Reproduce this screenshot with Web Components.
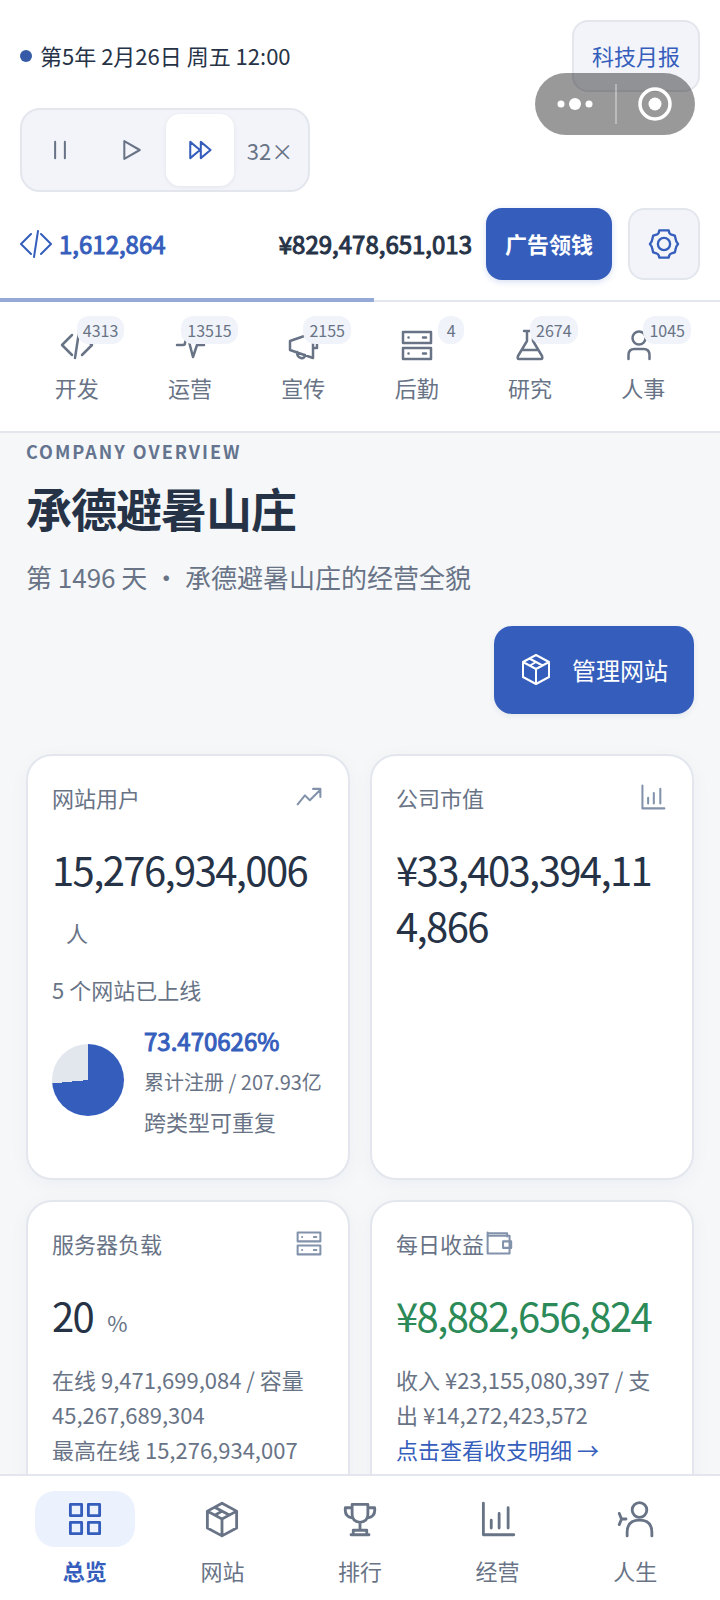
<!DOCTYPE html>
<html lang="zh-CN">
<head>
<meta charset="utf-8">
<meta name="viewport" content="width=device-width, initial-scale=1">
<title>公司总览</title>
<style>
html, body { margin: 0; height: 100%; }
body {
  --ink: #263347; --muted: #687386; --blue: #355ebc; --line: #e3e7ed; --soft: #f2f4f9; --page: #f5f7f9; --green: #2b8a58; --icon: #8292ab;
  font-family: "Noto Sans CJK SC", "Noto Sans", sans-serif; font-size: 22px; color: var(--ink); background: var(--page);
}
</style>
</head>
<body>
<game-app></game-app>
<script>
const define = (name, html) => customElements.define(name, class extends HTMLElement {
  connectedCallback() {
    if (this.shadowRoot) return;
    const root = this.attachShadow({ mode: 'open' });
    const t = document.createElement('template');
    t.innerHTML = typeof html === 'function' ? html(this) : html;
    root.append(t.content.cloneNode(true));
  }
});

const ICONS = {
  pause: '<path d="M10 6v20M22 6v20"/>',
  play: '<path d="M9 5v22l19-11z"/>',
  forward: '<path d="M4 6v20l12-10zM17 6v20l12-10z"/>',
  code: '<path d="M11 6L1 16l10 10M21 6l10 10-10 10M18 3l-4 26"/>',
  gear: '<path d="M11 1.500h10q.5 4 3 4.500l3.500 1 1 4q0 2 2.500 5-2.500 3-2.500 5l-1 4-3.500 1q-2.500.5-3 4.500h-10q-.5-4-3-4.500l-3.500-1-1-4q0-2-2.500-5 2.500-3 2.500-5l1-4 3.500-1q2.500-.5 3-4.500z"/><circle cx="16" cy="16" r="6.500"/>',
  pulse: '<path d="M3 16h6q2 0 2-2l2-9 6 23 4-12h7"/>',
  megaphone: '<path d="M3 12L26 4v25L3 21zM26 11h4v8h-4M10 23c0 7 8 8 8 3"/>',
  server: '<rect x="2" y="3" width="28" height="11"/><rect x="2" y="19" width="28" height="11"/><path d="M7.500 8.500h.1M22 8.500h3M7.500 24.500h.1M22 24.500h3"/>',
  flask: '<path d="M10 2h12M13 2v10L4 27q-1 3 1 3h22q2 0 1-3L19 12V2M8 21h16"/>',
  person: '<circle cx="12" cy="9" r="6.500"/><path d="M1.500 30v-4q0-6 6-6h9q6 0 6 6v4"/>',
  box: '<path d="M16 2l13 7v15l-13 7-13-7V9zM3 9l13 7 13-7M16 16v15M9.500 5.500l13 7M10 12.500l6-3.500"/>',
  trend: '<path d="M2 25L11 14l6 6L30 7M21 6h9v10"/>',
  chart: '<path d="M3 2v28h27M10 17v7M17 11v13M25 6v18"/>',
  wallet: '<path d="M2 4h24v4M2 3v26h27V7H2M21 14h10v8H21z"/>',
  grid: '<path d="M3 3h10v10H3zM19 3h10v10H19zM3 19h10v10H3zM19 19h10v10H19z"/>',
  trophy: '<path d="M9 3h14v9q0 6-7 7-7-1-7-7zM9 6H3q-1 8 6 9M23 6h6q1 8-6 9M16 19v7M10 30v-4h12v4M8 30h16"/>',
  life: '<circle cx="20" cy="8" r="6.500"/><path d="M9 31v-3q0-11 11-11t11 11v3M2 11l2 5-2 5M4 16l4 0"/>'
};

define('ui-icon', el => `<style>
:host { display: inline-flex; flex: none; }
svg { display: block; overflow: visible; width: var(--size, 28px); height: var(--size, 28px); fill: none; stroke: currentColor; stroke-width: var(--stroke, 2.5); stroke-linejoin: round; stroke-linecap: round; }
</style><svg viewBox="0 0 32 32" aria-hidden="true">${ICONS[el.getAttribute('name')]}</svg>`);

define('speed-control', `<style>
:host { display: flex; }
.group { display: flex; gap: 2px; padding: 4px; border: 2px solid var(--line); border-radius: 20px; background: var(--soft); }
button { width: 68px; height: 72px; padding: 0; border: 0; border-radius: 14px; background: none; color: var(--muted); font: inherit; display: flex; align-items: center; justify-content: center; }
button.on { background: #fff; color: var(--blue); box-shadow: 0 1px 4px #26334714; }
ui-icon { --size: 26px; }
</style>
<div class="group" role="group" aria-label="速度">
<button aria-label="暂停"><ui-icon name="pause"></ui-icon></button>
<button aria-label="播放"><ui-icon name="play"></ui-icon></button>
<button class="on" aria-label="快进"><ui-icon name="forward"></ui-icon></button>
<button>32×</button>
</div>`);

define('status-header', `<style>
:host { display: block; flex: none; background: #fff; }
.rows { display: flex; flex-direction: column; gap: 16px; padding: 20px 20px 18px; }
.row { display: flex; align-items: center; }
.dot { width: 12px; height: 12px; border-radius: 50%; background: #365aa5; margin-right: 8px; }
time { flex: 1; }
time, .num { padding-bottom: 2px; }
button { box-sizing: border-box; height: 72px; padding: 0 18px 2px; border: 2px solid var(--line); border-radius: 16px; background: var(--soft); color: var(--blue); font: inherit; display: flex; align-items: center; justify-content: center; }
.ad { padding: 0 17px 2px; border-color: var(--blue); background: var(--blue); color: #fff; font-weight: 700; box-shadow: 0 2px 6px #355ebc33; margin: 0 16px 0 14px; }
.set { width: 72px; padding: 0; }
.points { flex: 1; display: flex; align-items: center; gap: 7px; color: var(--blue); }
.num { font-size: 24px; -webkit-text-stroke: 1px currentColor; }
ui-icon { --size: 32px; --stroke: 2; }
.set ui-icon { --size: 30px; --stroke: 2.5; }
.track { display: flex; align-items: flex-end; height: 4px; background: linear-gradient(var(--line), var(--line)) bottom / 100% 2px no-repeat; }
.fill { width: 52%; height: 4px; background: #94a9d6; }
</style>
<div class="rows">
<div class="row"><span class="dot"></span><time>第5年 2月26日 周五 12:00</time><button>科技月报</button></div>
<speed-control></speed-control>
<div class="row"><span class="points"><ui-icon name="code"></ui-icon><span class="num">1,612,864</span></span><span class="num">¥829,478,651,013</span><button class="ad">广告领钱</button><button class="set" aria-label="设置"><ui-icon name="gear"></ui-icon></button></div>
</div>
<div class="track"><div class="fill"></div></div>`);

define('window-capsule', `<style>
:host { position: absolute; top: 73px; right: 25px; display: flex; width: 160px; height: 62px; border-radius: 31px; background: #00000066; color: #fff; }
button { flex: 1; border: 0; padding: 0; background: none; color: inherit; display: flex; align-items: center; justify-content: center; }
button + button { background: linear-gradient(#ffffff55, #ffffff55) left / 2px 40px no-repeat; }
svg { fill: currentColor; }
</style>
<button aria-label="更多"><svg width="36" height="14"><circle cx="4" cy="7" r="3.500"/><circle cx="18" cy="7" r="6"/><circle cx="32" cy="7" r="3.500"/></svg></button>
<button aria-label="关闭"><svg width="34" height="34"><circle cx="17" cy="17" r="15" fill="none" stroke="currentColor" stroke-width="3.500"/><circle cx="17" cy="17" r="6.500"/></svg></button>`);

define('dept-item', el => `<style>
:host { flex: 1; display: block; }
button { position: relative; width: 100%; border: 0; padding: 27px 0 28px; background: none; color: var(--muted); font: inherit; line-height: 32px; display: flex; flex-direction: column; align-items: center; gap: 10px; }
.badge { position: absolute; top: 14px; right: 9px; box-sizing: border-box; min-width: 26px; height: 28px; padding: 0 6px; border-radius: 12px; background: #f0f3f9; font-size: 16px; line-height: 28px; text-align: center; }
ui-icon { --size: 32px; }
</style><button><ui-icon name="${el.getAttribute('icon')}"></ui-icon><slot></slot><span class="badge">${el.getAttribute('count')}</span></button>`);

define('dept-nav', `<style>
:host { display: flex; flex: none; padding: 0 20px; background: #fff; border-bottom: 2px solid var(--line); }
</style>
<dept-item icon="code" count="4313">开发</dept-item>
<dept-item icon="pulse" count="13515">运营</dept-item>
<dept-item icon="megaphone" count="2155">宣传</dept-item>
<dept-item icon="server" count="4">后勤</dept-item>
<dept-item icon="flask" count="2674">研究</dept-item>
<dept-item icon="person" count="1045">人事</dept-item>`);

define('page-heading', `<style>
:host { display: block; }
.over { margin: 0; font-size: 18px; line-height: 28px; font-weight: 700; letter-spacing: 2px; color: #64748f; }
h1 { margin: 10px 0 0; font-size: 46px; line-height: 64px; font-weight: 700; letter-spacing: -1px; }
.sub { margin: 18px 0 0; font-size: 26px; line-height: 40px; color: var(--muted); }
button { margin: 29px 0 0 auto; height: 88px; padding: 0 26px 2px; border: 0; border-radius: 18px; background: var(--blue); color: #fff; font: inherit; font-size: 24px; display: flex; align-items: center; gap: 20px; box-shadow: 0 2px 6px #26334714; }
ui-icon { --size: 32px; --stroke: 2; }
</style>
<p class="over">COMPANY OVERVIEW</p>
<h1>承德避暑山庄</h1>
<p class="sub">第 1496 天 · 承德避暑山庄的经营全貌</p>
<button><ui-icon name="box"></ui-icon>管理网站</button>`);

define('stat-card', el => `<style>
:host { display: block; box-sizing: border-box; min-width: 0; padding: 24px 24px 38px; border: 2px solid var(--line); border-radius: 26px; background: #fff; box-shadow: 0 4px 20px #2633470a; color: var(--muted); }
header { display: flex; align-items: center; justify-content: space-between; padding-right: 2px; line-height: 34px; }
:host([compact]) header { justify-content: flex-start; gap: 2px; }
ui-icon { --size: 26px; color: var(--icon); }
.value { margin: 27px 0 0; font-size: 40px; line-height: 56px; letter-spacing: -.04em; color: var(--value, var(--ink)); word-break: break-all; }
.unit { margin-left: 14px; font-size: 22px; line-height: 22px; letter-spacing: 0; color: var(--muted); }
.detail { line-height: 35px; margin-top: 19px; }
</style>
<header><span>${el.getAttribute('label')}</span><ui-icon name="${el.getAttribute('icon')}"></ui-icon></header>
<p class="value">${el.getAttribute('value')}${el.hasAttribute('unit') ? `<wbr><span class="unit">${el.getAttribute('unit')}</span>` : ''}</p>
<div class="detail"><slot></slot></div>`);

define('share-pie', `<style>
:host { display: flex; align-items: center; gap: 20px; margin-top: 13px; }
.pie { flex: none; width: 72px; height: 72px; border-radius: 50%; background: conic-gradient(var(--blue) 73.47%, #e2e7ee 0); }
strong { display: block; font-size: 24px; line-height: 42px; font-weight: 400; -webkit-text-stroke: 1px currentColor; color: var(--blue); }
.text { white-space: nowrap; line-height: 38px; }
.small { font-size: 20px; line-height: 40px; }
</style>
<div class="pie"></div>
<div class="text"><strong>73.470626%</strong><div class="small">累计注册 / 207.93亿</div><div>跨类型可重复</div></div>`);

define('overview-page', `<style>
:host { display: block; flex: 1; min-height: 0; overflow: auto; scrollbar-width: none; padding: 4px 26px 0; }
.cards { display: grid; grid-template-columns: 1fr 1fr; gap: 20px; margin-top: 40px; }
.green { --value: var(--green); }
a { color: var(--blue); text-decoration: none; }
</style>
<page-heading></page-heading>
<div class="cards">
<stat-card label="网站用户" icon="trend" value="15,276,934,006" unit="人">5 个网站已上线<share-pie></share-pie></stat-card>
<stat-card label="公司市值" icon="chart" value="¥33,403,394,114,866"></stat-card>
<stat-card label="服务器负载" icon="server" value="20" unit="%">在线 9,471,699,084 / 容量 45,267,689,304<br>最高在线 15,276,934,007</stat-card>
<stat-card class="green" compact label="每日收益" icon="wallet" value="¥8,882,656,824">收入 ¥23,155,080,397 / 支出 ¥14,272,423,572<br><a href="#finance">点击查看收支明细 →</a></stat-card>
</div>`);

define('tab-item', el => `<style>
:host { flex: 1; display: block; }
a { display: flex; flex-direction: column; align-items: center; gap: 8px; color: var(--muted); text-decoration: none; line-height: 30px; }
.pill { display: flex; align-items: center; justify-content: center; width: 100px; height: 56px; border-radius: 20px; }
ui-icon { --size: 36px; }
:host([active]) a { color: var(--blue); font-weight: 700; }
:host([active]) .pill { background: #ebf1fd; }
</style><a href="#${el.getAttribute('icon')}"><span class="pill"><ui-icon name="${el.getAttribute('icon')}"></ui-icon></span><slot></slot></a>`);

define('tab-bar', `<style>
:host { display: flex; flex: none; padding: 15px 16px 15px; background: #fff; border-top: 2px solid var(--line); }
</style>
<tab-item icon="grid" active>总览</tab-item>
<tab-item icon="box">网站</tab-item>
<tab-item icon="trophy">排行</tab-item>
<tab-item icon="chart">经营</tab-item>
<tab-item icon="life">人生</tab-item>`);

define('game-app', `<style>
:host { display: flex; flex-direction: column; height: 100vh; position: relative; overflow: hidden; }
</style>
<status-header></status-header>
<dept-nav></dept-nav>
<overview-page></overview-page>
<tab-bar></tab-bar>
<window-capsule></window-capsule>`);
</script>
</body>
</html>
